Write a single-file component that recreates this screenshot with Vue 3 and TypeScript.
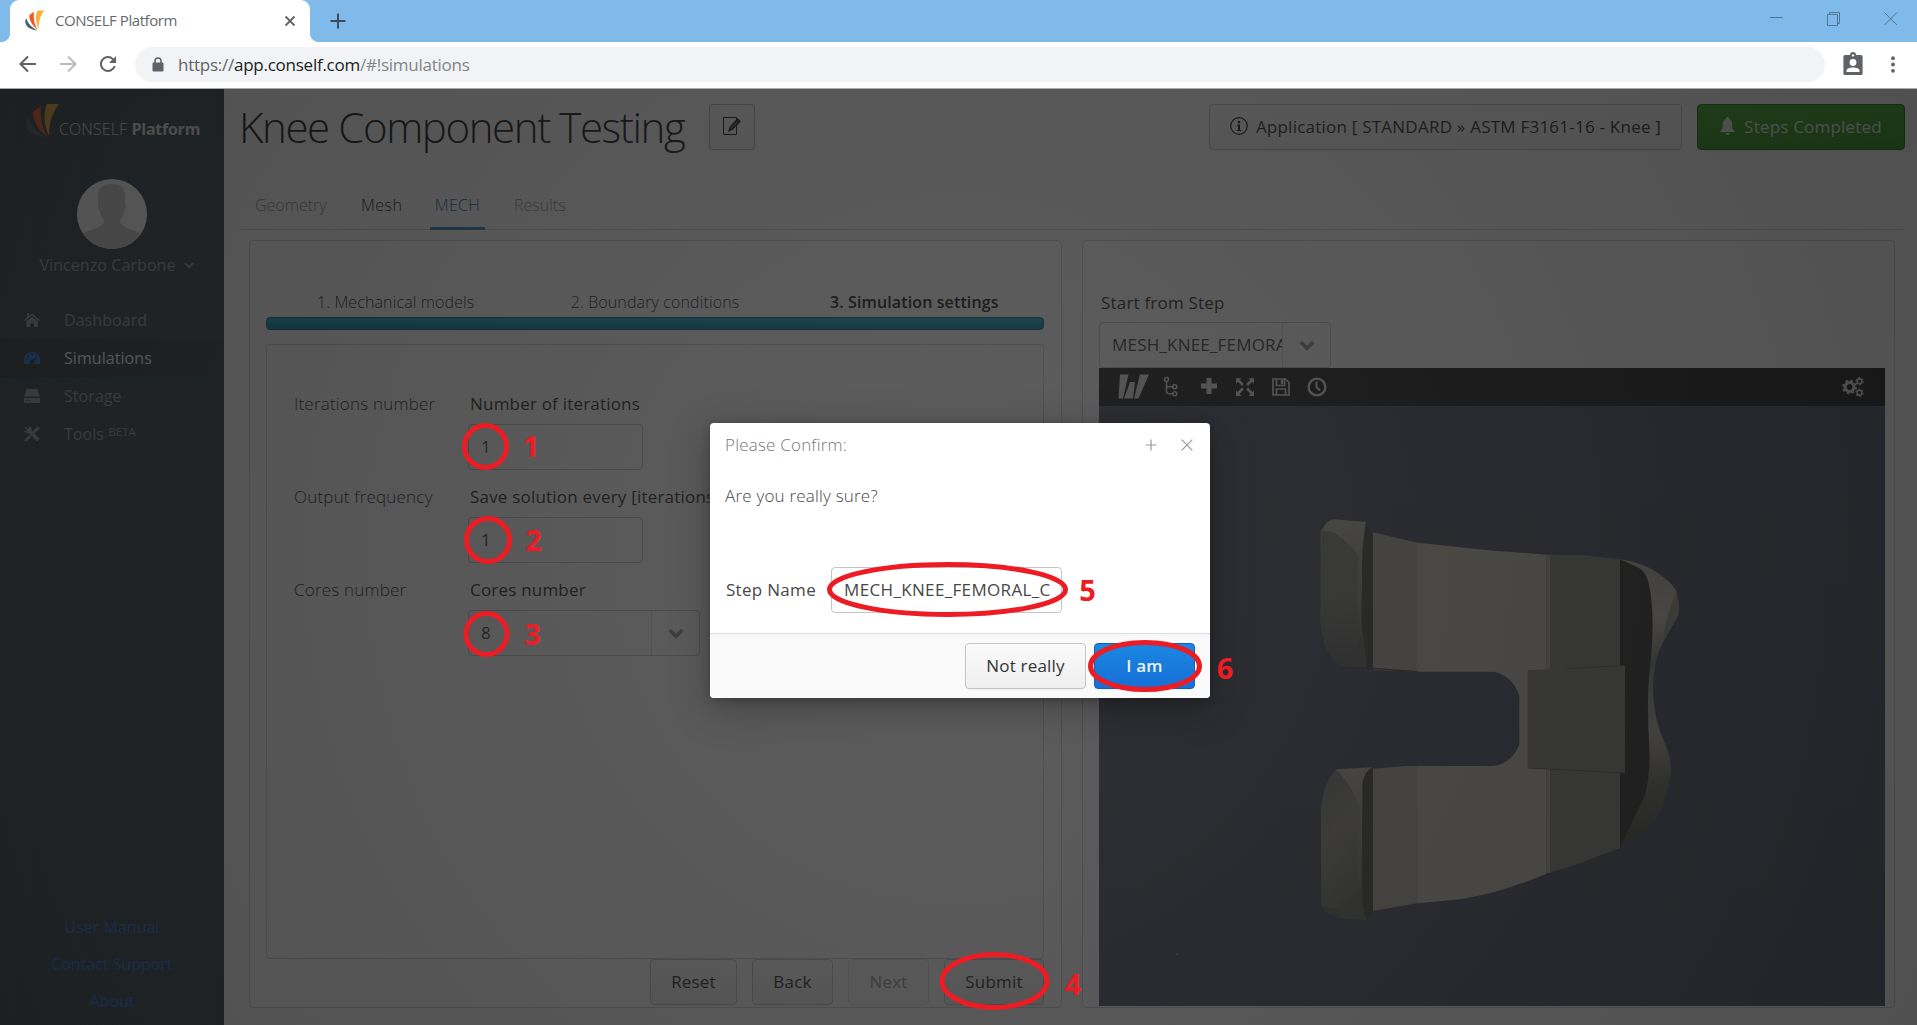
<script setup lang="ts">
interface MenuItem { label: string; sup?: string; icon: string; active?: boolean }
interface Field { label: string; caption: string; value: string; combo?: boolean }
interface Mark { text: string; cx: number; cy: number; rx: number; ry: number; tx: number; ty: number }

const menu: MenuItem[] = [
  { label: 'Dashboard', icon: 'home' },
  { label: 'Simulations', icon: 'gauge', active: true },
  { label: 'Storage', icon: 'disk' },
  { label: 'Tools', sup: 'BETA', icon: 'tools' },
]
const links = ['User Manual', 'Contact Support', 'About']
const tabs = [
  { label: 'Geometry', cls: 'off first' },
  { label: 'Mesh', cls: 'mesh' },
  { label: 'MECH', cls: 'on' },
  { label: 'Results', cls: 'off' },
]
const steps = ['1. Mechanical models', '2. Boundary conditions', '3. Simulation settings']
const fields: Field[] = [
  { label: 'Iterations number', caption: 'Number of iterations', value: '1' },
  { label: 'Output frequency', caption: 'Save solution every [iterations]', value: '1' },
  { label: 'Cores number', caption: 'Cores number', value: '8', combo: true },
]
const marks: Mark[] = [
  { text: '1', cx: 485.5, cy: 446.5, rx: 21, ry: 21, tx: 531, ty: 457 },
  { text: '2', cx: 488, cy: 540, rx: 21.5, ry: 21.5, tx: 533.5, ty: 551 },
  { text: '3', cx: 486.5, cy: 634, rx: 20.5, ry: 20.5, tx: 532.5, ty: 645 },
  { text: '4', cx: 994.5, cy: 981, rx: 52.5, ry: 26.5, tx: 1073, ty: 995 },
  { text: '5', cx: 947.5, cy: 589.5, rx: 118, ry: 25, tx: 1087.5, ty: 601 },
  { text: '6', cx: 1145, cy: 666, rx: 54.5, ry: 23.5, tx: 1225, ty: 679 },
]
</script>

<template>
  <div class="window">
    <header class="tabstrip">
      <div class="btab">
        <svg class="fav" viewBox="0 0 36 36">
          <path d="M4 14C-1 22 4 33 23 35C13 30 7 23 4 14Z" fill="#43606b" />
          <path d="M9 9L17 3C16 15 18 26 24 34C14 27 9 18 9 9Z" fill="#f15a24" />
          <path d="M23 1H35C28 10 25 20 25 33C20 22 19 10 23 1Z" fill="#fbb03b" />
        </svg>
        <span class="btitle">CONSELF Platform</span>
        <svg class="bx" viewBox="0 0 12 12"><path d="M1.5 1.5L10.5 10.5M10.5 1.5L1.5 10.5" stroke="#5f6368" stroke-width="1.8" /></svg>
      </div>
      <svg class="plus" viewBox="0 0 16 16"><path d="M8 .5V15.5M.5 8H15.5" stroke="#3c4c5a" stroke-width="2" /></svg>
      <div class="winbtns">
        <svg width="14" height="14" viewBox="0 0 14 14"><path d="M0 5.5H13" stroke="#4f7896" /></svg>
        <svg width="14" height="14" viewBox="0 0 14 14" fill="none" stroke="#4f7896"><path d="M.5 2.5H10.5V13.5H.5ZM2.5 2.5V.5H12.5V11.5H10.5" /></svg>
        <svg width="14" height="14" viewBox="0 0 14 14"><path d="M.5 .5L13 13M13 .5L.5 13" stroke="#4f7896" /></svg>
      </div>
    </header>
    <div class="toolbar">
      <svg class="nav" viewBox="0 0 24 24"><path d="M20 12H5M12 4.5L4.5 12L12 19.5" fill="none" stroke="#5f6368" stroke-width="2.1" /></svg>
      <svg class="nav" viewBox="0 0 24 24"><path d="M4 12H19M12 4.5L19.5 12L12 19.5" fill="none" stroke="#babcbe" stroke-width="2.1" /></svg>
      <svg class="nav" viewBox="0 0 24 24"><path d="M17.6 6.4A8 8 0 1 0 19.7 14H17.6A6 6 0 1 1 16.2 7.8L13 11H20V4Z" fill="#5f6368" /></svg>
      <div class="url">
        <svg class="lock" viewBox="0 0 12 15"><path d="M3 6V4a3 3 0 0 1 6 0V6" fill="none" stroke="#5f6368" stroke-width="1.6" /><rect x=".5" y="5.5" width="11" height="9" rx="1.2" fill="#5f6368" /></svg>
        <span class="urltext"><i>https://</i>app.conself.com<i class="path">/#!simulations</i></span>
      </div>
      <svg class="person" viewBox="0 0 20 24"><path d="M2 3H7A3 3 0 0 1 13 3H18A1.6 1.6 0 0 1 19.6 4.6V21.4A1.6 1.6 0 0 1 18 23H2A1.6 1.6 0 0 1 .4 21.4V4.6A1.6 1.6 0 0 1 2 3Z" fill="#5f6368" /><circle cx="10" cy="3.4" r="1.2" fill="#fff" /><circle cx="10" cy="10.5" r="3.4" fill="#fff" /><path d="M3.5 20V18.5C3.5 14.6 16.5 14.6 16.5 18.5V20Z" fill="#fff" /></svg>
      <svg class="dots" viewBox="0 0 4 17" fill="#5f6368"><circle cx="2" cy="2.2" r="1.9" /><circle cx="2" cy="8.5" r="1.9" /><circle cx="2" cy="14.8" r="1.9" /></svg>
    </div>

    <div class="app">
      <aside class="side">
        <div class="logo">
          <svg viewBox="0 0 36 36">
            <path d="M4 14C-1 22 4 33 23 35C13 30 7 23 4 14Z" fill="#53686f" />
            <path d="M9 9L17 3C16 15 18 26 24 34C14 27 9 18 9 9Z" fill="#f0602c" />
            <path d="M23 1H35C28 10 25 20 25 33C20 22 19 10 23 1Z" fill="#e8ac3a" />
          </svg>
          <span>CONSELF <b>Platform</b></span>
        </div>
        <svg class="avatar" viewBox="0 0 70 70">
          <defs><clipPath id="av"><circle cx="35" cy="35" r="35" /></clipPath></defs>
          <g clip-path="url(#av)"><rect width="70" height="70" fill="#fff" /><path d="M21 16C21 8 27 5 35 5S48 8 48 17V25L49 28L47 33C46 40 43 39 43 42C44 49 56 50 64 55V70H5V55C14 50 26 49 27 42C27 39 24 40 23 33L21 29Z" fill="#d0d0d0" /></g>
        </svg>
        <div class="user">Vincenzo Carbone <svg viewBox="0 0 10 7"><path d="M1 1.2L5 5.2L9 1.2" fill="none" stroke="currentColor" stroke-width="1.8" /></svg></div>
        <nav>
          <div v-for="m in menu" :key="m.label" class="item" :class="{ active: m.active }">
            <svg viewBox="0 0 16 16" fill="currentColor">
              <path v-if="m.icon === 'home'" d="M8 1.6L16 8L15 9.1L8 3.6L1 9.1L0 8L3 5.6V1H5V4ZM8 4.8L13.8 9.3V15H9.8V11H6.4V15H2.2V9.3Z" />
              <template v-else-if="m.icon === 'gauge'"><path d="M8 2A8 8 0 0 0 0 10V14H16V10A8 8 0 0 0 8 2Z" /><g fill="#30353b"><circle cx="2.4" cy="9.5" r=".8" /><circle cx="4.2" cy="5.8" r=".8" /><circle cx="8" cy="4" r=".8" /><circle cx="11.8" cy="5" r=".8" /><path d="M14 6.6L9.8 11A2 2 0 1 1 8.4 9.8Z" /></g></template>
              <path v-else-if="m.icon === 'disk'" fill-rule="evenodd" d="M3 1H13L16 8.6H0ZM0 10H16V15H0ZM2 12V13H4V12ZM5 12V13H6.4V12Z" />
              <template v-else><path d="M13.2 0L16 2.8L12 6L7 10.5L5.5 9L10 4Z" /><path d="M5.6 9.3L6.9 10.6L3 15.4L.6 15.6V13.2Z" /><path d="M1.5 .4L4.2 3L5.2 1.8L4.4 .2C7 0 8.4 2.4 7.5 4.4L15.6 13L13.2 15.6L5 7.1C2.6 8 .2 6.4 .2 3.8L2 5L3 4L.4 1.6Z" /></template>
            </svg>
            <span>{{ m.label }} <small v-if="m.sup">{{ m.sup }}</small></span>
          </div>
        </nav>
        <div class="links"><a v-for="l in links" :key="l">{{ l }}</a></div>
      </aside>

      <main class="main">
        <div class="head">
          <h1>Knee Component Testing</h1>
          <button class="btn edit">
            <svg viewBox="0 0 18 18"><path d="M.5 .5H13.5V17.5H.5Z" fill="none" stroke="#222" /><path d="M14.5 1L18 4.2L9.5 13L5 15L6.6 10Z" fill="#222" /><path d="M8 11.5L14.5 4.6" stroke="#aaa" stroke-width=".9" /></svg>
          </button>
          <div class="grow"></div>
          <button class="btn appl">
            <svg viewBox="0 0 18 18"><circle cx="9" cy="9" r="8.3" fill="none" stroke="#222" stroke-width="1.2" /><circle cx="9" cy="5" r="1.3" fill="#222" /><path d="M7 7.5H10V13H11.3V14H6.8V13H8V8.5H7Z" fill="#222" /></svg>
            Application [ STANDARD » ASTM F3161-16 - Knee ]
          </button>
          <button class="btn green">
            <svg viewBox="0 0 15 18"><path d="M7.5 0A1.5 1.5 0 0 1 9 1.7C12 3 12.2 6 12.2 9S13 13 15 14.5V15H0V14.5C2 13 2.8 12 2.8 9S3 3 6 1.7A1.5 1.5 0 0 1 7.5 0ZM5.5 16H9.5A2 2 0 0 1 5.5 16Z" fill="#e4ede2" /></svg>
            Steps Completed
          </button>
        </div>
        <div class="tabs"><span v-for="t in tabs" :key="t.label" :class="t.cls">{{ t.label }}</span></div>
        <div class="panels">
          <section class="panel left">
            <div class="steps"><span v-for="(s, i) in steps" :key="s" :class="{ cur: i === 2 }">{{ s }}</span></div>
            <div class="progress"></div>
            <div class="form">
              <div v-for="f in fields" :key="f.label" class="row">
                <label>{{ f.label }}</label>
                <div class="cell">
                  <div class="cap">{{ f.caption }}</div>
                  <div class="input" :class="{ combo: f.combo }">
                    <span>{{ f.value }}</span>
                    <div v-if="f.combo" class="arrow"><svg viewBox="0 0 16 11"><path d="M1.7 2L8 8.3L14.3 2" fill="none" stroke="#999" stroke-width="3.6" /></svg></div>
                  </div>
                </div>
              </div>
            </div>
            <div class="actions">
              <button class="btn w1">Reset</button><button class="btn w2">Back</button><button class="btn w2 dis">Next</button><button class="btn w3">Submit</button>
            </div>
          </section>
          <section class="panel right">
            <div class="start">Start from Step</div>
            <div class="input combo sel"><span>MESH_KNEE_FEMORA</span><div class="arrow"><svg viewBox="0 0 16 11"><path d="M1.7 2L8 8.3L14.3 2" fill="none" stroke="#999" stroke-width="3.6" /></svg></div></div>
            <div class="vbar">
              <svg class="vicons" viewBox="0 0 240 38" fill="none" stroke="#e2e2e2">
                <g fill="#e2e2e2" stroke="none"><path d="M21 6.5H29.5L24 30.5H19.5ZM31 14H36L34 30.5H25ZM41 6.5H50L39.5 30.5H35Z" /></g>
                <g stroke-width="1.5"><circle cx="67.5" cy="11.5" r="2" /><circle cx="75.8" cy="18.7" r="2" /><circle cx="75.8" cy="25.7" r="2" /><path d="M67.5 13.5V23.5Q67.5 25.7 70 25.7H73.8M67.5 18.7H73.8" /></g>
                <path d="M110 10V26M102 18H118" stroke-width="5" />
                <g stroke-width="2.6"><path d="M139 12L144 17M153 12L148 17M139 25.5L144 20.5M153 25.5L148 20.5" /></g>
                <path d="M137 10.2H142.5L137 15.7ZM155 10.2H149.5L155 15.7ZM137 28H142.5L137 22.5ZM155 28H149.5L155 22.5Z" fill="#e2e2e2" stroke="none" />
                <g stroke-width="1.7"><path d="M174 11H186.5L190 14.5V27H174ZM177.5 11V17.5H185.5V11M177.5 27V21H186.5V27" /><path d="M183 12V16" stroke-width="2.4" /></g>
                <circle cx="218" cy="19" r="8.4" stroke-width="2.4" /><path d="M217.5 13.5V19L221 22.5" stroke-width="2" />
              </svg>
              <svg class="cogs" viewBox="0 0 22 20" fill="none" stroke="#e2e2e2">
                <circle cx="7.5" cy="10" r="4.4" stroke-width="3" /><circle cx="7.5" cy="10" r="6.4" stroke-width="2" stroke-dasharray="2.5 2.53" />
                <circle cx="17.5" cy="4.3" r="2.4" stroke-width="1.6" /><circle cx="17.5" cy="4.3" r="3.6" stroke-width="1.2" stroke-dasharray="1.9 1.87" />
                <circle cx="17.5" cy="15.7" r="2.4" stroke-width="1.6" /><circle cx="17.5" cy="15.7" r="3.6" stroke-width="1.2" stroke-dasharray="1.9 1.87" />
              </svg>
            </div>
            <svg class="viewer" viewBox="1099 406 786 600">
              <defs>
                <linearGradient id="bg" x1="0" y1="0" x2="0" y2="1"><stop offset="0" stop-color="#5a5d6e" /><stop offset="1" stop-color="#585b6c" /></linearGradient>
                <linearGradient id="pad" x1="0" y1="0" x2="0" y2="1"><stop offset="0" stop-color="#bab7aa" /><stop offset=".6" stop-color="#8e8d84" /><stop offset="1" stop-color="#666765" /></linearGradient>
                <linearGradient id="face" x1="0" y1="0" x2="0" y2="1"><stop offset="0" stop-color="#8c8b84" /><stop offset=".45" stop-color="#8a8982" /><stop offset="1" stop-color="#66676a" /></linearGradient>
                <linearGradient id="pad2" x1="0" y1="0" x2=".25" y2="1"><stop offset="0" stop-color="#7d7e79" /><stop offset=".5" stop-color="#99978d" /><stop offset="1" stop-color="#7b7a72" /></linearGradient>
                <linearGradient id="rim" x1="0" y1="0" x2="0" y2="1"><stop offset="0" stop-color="#b2b0a4" /><stop offset=".2" stop-color="#cbc8ba" /><stop offset=".36" stop-color="#8b8a82" /><stop offset=".6" stop-color="#b8b5a8" /><stop offset=".78" stop-color="#76756e" /><stop offset="1" stop-color="#555650" /></linearGradient>
                <clipPath id="body"><path d="M278 127L412 158L640 182L800 194L905 195L1020 207V1075Q960 1095 905 1118L803 1150Q660 1210 540 1228L412 1240L278 1263V836L380 828H638Q690 825 718 765V617Q700 560 644 545H412L278 540Z" /></clipPath>
              </defs>
              <rect x="1099" y="406" width="786" height="600" fill="url(#bg)" />
              <circle cx="1177" cy="954" r="1" fill="#9a9a92" />
              <g transform="translate(1280 490) scale(.33333)">
                <path d="M1020 207Q1100 220 1145 258Q1185 285 1191 312Q1202 360 1190 385Q1160 435 1140 475Q1115 540 1120 620Q1125 690 1148 745Q1180 810 1170 860Q1155 980 1080 1035L1020 1075Z" fill="url(#rim)" />
                <path d="M1190 310Q1202 360 1186 390L1150 450Q1160 360 1190 310Z" fill="#83827a" opacity=".6" />
                <path d="M1018 206L1078 235Q1100 248 1106 280Q1118 330 1118 410Q1115 500 1107 560Q1100 650 1108 770Q1112 850 1095 915L1020 1075Z" fill="#3f3f3e" />
                <g clip-path="url(#body)">
                  <rect x="278" y="100" width="136" height="1200" fill="#b3b0a7" />
                  <rect x="413" y="100" width="386" height="1200" fill="#c5c2b5" />
                  <rect x="799" y="100" width="12" height="1200" fill="#b4b1a5" />
                  <rect x="810" y="100" width="211" height="1200" fill="#8d8c84" />
                </g>
                <path d="M743 541L960 531L975 526L1035 526V848L905 842L743 833Z" fill="#8d8c84" />
                <path d="M743 834L905 842L1035 849M860 536L965 530L1035 526" stroke="#666660" stroke-width="3" fill="none" />
                <path d="M247 96L278 127V540L262 532Q247 480 246 380ZM247 860Q255 840 278 836V1263L262 1291L248 1270Z" fill="#54534f" />
                <path d="M257 96L247 180L244 400L262 536L178 532L140 480Q125 430 122 405V125Q140 90 162 88Z" fill="url(#pad)" />
                <path d="M124 125Q150 115 180 140Q220 170 236 200Q222 340 244 415L205 532L165 520Q130 460 122 405Z" fill="url(#face)" />
                <path d="M205 532L244 430L262 536Z" fill="#6d6d69" />
                <path d="M178 532L262 534L412 545" stroke="#55544f" stroke-width="4" fill="none" />
                <path d="M170 838L278 832Q255 840 247 880L245 1240L262 1291L180 1284Q130 1270 124 1248V960Q130 880 170 838Z" fill="url(#pad)" />
                <path d="M168 840Q215 880 240 955L232 1205L182 1260L124 1248V960Q130 880 168 840Z" fill="url(#pad2)" />
                <path d="M235 1204L247 1212V1270L262 1291L180 1284L172 1250Z" fill="#73726c" />
              </g>
            </svg>
          </section>
        </div>
      </main>

      <div class="curtain"></div>
      <div class="modal">
        <div class="mhead"><span>Please Confirm:</span>
          <svg viewBox="0 0 12 12"><path d="M6 .5V11.5M.5 6H11.5" stroke="#999" stroke-width="1.2" /></svg>
          <svg viewBox="0 0 12 12"><path d="M.7 .7L11.3 11.3M11.3 .7L.7 11.3" stroke="#999" stroke-width="1.2" /></svg>
        </div>
        <p>Are you really sure?</p>
        <div class="mrow"><label>Step Name</label><div class="input"><span>MECH_KNEE_FEMORAL_C</span></div></div>
        <div class="mfoot"><button class="btn no">Not really</button><button class="btn yes">I am</button></div>
      </div>
    </div>

    <svg class="marks" viewBox="0 0 1917 1025">
      <g v-for="m in marks" :key="m.text">
        <ellipse :cx="m.cx" :cy="m.cy" :rx="m.rx" :ry="m.ry" fill="none" stroke="#ed1c24" stroke-width="5" />
        <text :x="m.tx" :y="m.ty" text-anchor="middle">{{ m.text }}</text>
      </g>
    </svg>
  </div>
</template>

<style>
body { margin: 0; overflow: hidden; }
</style>
<style scoped>
* { box-sizing: border-box; }
.window { position: relative; width: 1917px; height: 1025px; display: flex; flex-direction: column; overflow: hidden; font: 300 16px "Open Sans", "Noto Sans", sans-serif; color: #333; }
svg { display: block; flex: none; }
.tabstrip { height: 42px; background: #7fbaea; display: flex; align-items: flex-start; padding-left: 10px; }
.btab { position: relative; width: 300px; height: 42px; background: #fff; border-radius: 9px 9px 0 0; display: flex; align-items: center; padding: 0 14px 1px 14px; }
.btab::before, .btab::after { content: ""; position: absolute; bottom: 0; width: 8px; height: 8px; }
.btab::before { left: -8px; background: radial-gradient(circle at 0 0, transparent 7.5px, #fff 8px); }
.btab::after { right: -8px; background: radial-gradient(circle at 100% 0, transparent 7.5px, #fff 8px); }
.fav { width: 21px; height: 21px; }
.btitle { flex: 1; margin-left: 10px; padding-bottom: 1px; font-size: 15px; font-weight: 400; letter-spacing: -.45px; color: #65696d; }
.bx { width: 12px; height: 12px; }
.plus { width: 16px; height: 16px; margin: 13px 0 0 20px; }
.winbtns { display: flex; gap: 43px; margin: 12px 19px 0 auto; }
.toolbar { height: 47px; background: #fff; border-bottom: 1px solid #aaa; display: flex; align-items: center; padding: 0 8px 2px 16px; }
.nav { width: 24px; height: 24px; margin-right: 16px; }
.nav:nth-child(3) { margin-right: 15px; }
.url { width: 1690px; height: 35px; border-radius: 18px; background: #f1f3f4; display: flex; align-items: center; padding-left: 17px; }
.lock { width: 12px; height: 15px; }
.urltext { margin-left: 14px; font-size: 17px; font-weight: 400; letter-spacing: -.25px; color: #202124; }
.urltext i { font-style: normal; color: #5f6368; }
.urltext .path { color: #80868b; }
.person { width: 20px; height: 24px; margin-left: 18px; }
.dots { width: 4px; height: 17px; margin-left: 28px; }

.app { position: relative; flex: 1; display: flex; background: #fafafa; min-height: 0; }
.curtain { position: absolute; inset: 0; background: radial-gradient(circle at 50% 50%, #202020, #0e0e0e); opacity: .72; }
.side { width: 224px; background: linear-gradient(90deg, #445056, #424c52 93%, #42464c 98%); display: flex; flex-direction: column; align-items: center; font-weight: 400; }
.logo { align-self: flex-start; display: flex; margin: 14px 0 0 24px; height: 37px; color: #e2e2e2; font-weight: 300; white-space: nowrap; }
.logo svg { width: 36px; height: 36px; }
.logo span { font-size: 16px; line-height: 22px; margin: 15px 0 0 -1px; letter-spacing: .1px; }
.logo b { font-weight: 700; letter-spacing: -.25px; }
.avatar { width: 70px; height: 70px; margin-top: 39px; }
.user { height: 34px; display: flex; align-items: center; gap: 8px; padding-bottom: 2px; color: #9ba4a8; margin-left: 9px; letter-spacing: .08px; }
.user svg { width: 10px; height: 7px; }
nav { width: 224px; margin-top: 18px; }
.item { height: 38.1px; display: flex; align-items: center; padding-left: 24px; gap: 24px; color: #9ba4a8; letter-spacing: .06px; }
.item > svg { width: 16px; height: 16px; }
.item.active { background: #3f434a; color: #fff; }
.item.active > svg { color: #2f7fe0; }
.item small { font-size: 11.5px; vertical-align: 4px; line-height: 0; }
.links { margin-top: auto; display: flex; flex-direction: column; align-items: center; gap: 15px; padding-bottom: 13px; color: #2a72dd; line-height: 22px; }

.main { flex: 1; min-width: 0; padding-left: 15px; display: flex; flex-direction: column; }
.head { height: 76px; display: flex; align-items: flex-start; padding: 15px 12px 0 0; }
h1 { margin: -4px 0 0 0; font-size: 42px; line-height: 54px; font-weight: 300; letter-spacing: -1.4px; color: #1c1c1c; white-space: nowrap; width: 470px; }
.btn { font: 400 17px "Open Sans", sans-serif; letter-spacing: .2px; height: 46px; padding: 0 0 2px; border: 1px solid #c5c5c5; border-radius: 4px; background: linear-gradient(#fafafa, #efefef); color: #333; display: flex; align-items: center; justify-content: center; box-shadow: 0 1px 1px rgba(0, 0, 0, .05); white-space: nowrap; }
.edit { width: 46px; border-color: #b4b4b4; }
.edit svg { width: 18px; height: 18px; }
.grow { flex: 1; }
.appl { width: 473px; gap: 8px; letter-spacing: .23px; }
.appl svg { width: 18px; height: 18px; }
.green { width: 208px; margin-left: 15px; gap: 9px; border-color: #1e7a12; background: linear-gradient(#41a52f, #2f9320); color: #e4ede2; }
.green svg { width: 15px; height: 18px; }
.tabs { height: 65px; border-bottom: 1px solid #d5d5d5; margin-right: 12px; display: flex; align-items: flex-end; padding-left: 16px; color: #333; }
.tabs span { height: 36px; line-height: 24px; }
.tabs .off { color: #8c8c8c; }
.tabs .first { width: 106px; }
.tabs .mesh { width: 69px; color: #222; letter-spacing: .5px; }
.tabs .on { width: 55px; text-align: center; color: #2368b4; border-bottom: 3px solid #2d7fd6; height: 37px; margin: 0 29px -1px 0; letter-spacing: .3px; }
.panels { display: flex; gap: 20px; padding: 10px 0 0 10px; }
.panel { height: 768px; border: 1px solid #d2d2d2; border-radius: 5px; background: #fcfcfc; }
.left { width: 813px; padding: 0 17px 0 16px; }
.steps { height: 76px; padding-top: 50px; display: flex; line-height: 22px; letter-spacing: .12px; }
.steps span { flex: 1; text-align: center; }
.steps .cur { font-weight: 600; color: #222; }
.progress { height: 13px; border-radius: 4px; border: 1px solid #0d6b96; background: linear-gradient(#1fa9c8, #0b86ae); }
.form { height: 615px; margin-top: 14px; border: 1px solid #d2d2d2; border-radius: 4px; padding: 48px 0 0 27px; font-size: 17px; letter-spacing: .2px; }
.row { display: flex; height: 93px; }
.row label { width: 174px; line-height: 22px; }
.cap { line-height: 22px; font-weight: 400; white-space: nowrap; height: 31px; margin-left: 2px; }
.input { width: 175px; height: 46px; border: 1px solid #c5c5c5; border-radius: 4px; display: flex; align-items: center; padding-left: 12px; font-size: 17px; font-weight: 400; overflow: hidden; color: #474747; }
.input > span { flex: 1; min-width: 0; overflow: hidden; white-space: nowrap; padding-bottom: 2px; }
.input.combo { width: 232px; }
.input.sel { letter-spacing: .2px; }
.arrow { width: 48px; align-self: stretch; border-left: 1px solid #ddd; display: flex; align-items: center; justify-content: center; }
.arrow svg { width: 16px; height: 11px; }
.actions { display: flex; justify-content: flex-end; gap: 15px; }
.w1 { width: 87px; } .w2 { width: 81px; } .w3 { width: 100px; }
.dis { opacity: .5; }
.right { width: 813px; padding: 50px 0 0 16px; }
.start { height: 31px; line-height: 24px; font-size: 17px; letter-spacing: .2px; font-weight: 400; margin-left: 2px; }
.vbar { width: 786px; height: 38px; background: #2a2a2a; display: flex; justify-content: space-between; align-items: center; padding-right: 21px; }
.vicons { width: 240px; height: 38px; }
.cogs { width: 22px; height: 20px; }
.viewer { width: 786px; height: 600px; }

.modal { position: absolute; left: 710px; top: 334px; width: 500px; height: 275px; border-radius: 4px; background: #fff; overflow: hidden; box-shadow: 0 10px 40px rgba(0, 0, 0, .28), 0 2px 10px rgba(0, 0, 0, .2); color: #474747; font-size: 17px; letter-spacing: .2px; }
.mhead { height: 44px; display: flex; align-items: center; padding: 0 17px 0 15px; color: #777; gap: 24px; }
.mhead span { flex: 1; padding-bottom: 2px; }
.mhead svg { width: 12px; height: 12px; }
.modal p { margin: 18px 15px 0; line-height: 22px; }
.mrow { display: flex; align-items: center; margin: 60px 0 0 16px; font-weight: 400; }
.mrow label { width: 105px; padding-bottom: 2px; letter-spacing: .3px; }
.mrow .input { width: 231px; padding-right: 4px; letter-spacing: .35px; }
.mfoot { height: 65px; margin-top: 20px; border-top: 1px solid #ddd; background: linear-gradient(#f6f6f6, #fafafa 6px); display: flex; justify-content: flex-end; padding: 9px 15px 0; gap: 8px; }
.no { width: 121px; }
.yes { width: 101px; border-color: #1362b1; background: linear-gradient(#1b87e3, #166ed5); color: #ecf2f8; font-weight: 600; }
.marks { position: absolute; inset: 0; width: 1917px; height: 1025px; pointer-events: none; }
.marks text { font: 700 29px "Open Sans", sans-serif; fill: #ed1c24; }
</style>
